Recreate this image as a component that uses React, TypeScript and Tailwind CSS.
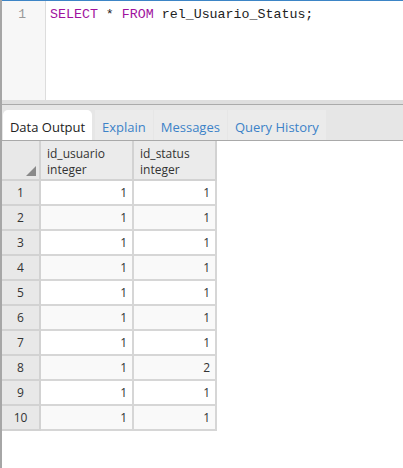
import React from 'react';

const rows = [
  [1, 1, 1],
  [2, 1, 1],
  [3, 1, 1],
  [4, 1, 1],
  [5, 1, 1],
  [6, 1, 1],
  [7, 1, 1],
  [8, 1, 2],
  [9, 1, 1],
  [10, 1, 1],
];

const tabs = ['Explain', 'Messages', 'Query History'];

export default function App() {
  return (
    <div
      className="w-[403px] h-[468px] bg-white flex flex-col overflow-hidden border-l-2 border-[#a6a6a6]"
      style={{ fontFamily: '"Open Sans", "Noto Sans", sans-serif' }}
    >
      {/* Query editor */}
      <div className="h-[100px] flex border-t border-[#3d85c6] shrink-0">
        <div className="w-[44px] bg-[#f7f7f7] border-r border-[#dddddd] text-right pr-[19px] pt-[5px] text-[13px] leading-[18px] text-[#999999]"
          style={{ fontFamily: '"Liberation Mono", monospace' }}>
          1
        </div>
        <div
          className="pl-[4px] pt-[5px] text-[13.3px] leading-[18px] text-[#222222]"
          style={{ fontFamily: '"Liberation Mono", monospace' }}
        >
          <span className="text-[#a0129e]">SELECT</span> * <span className="text-[#a0129e]">FROM</span> rel_Usuario_Status;
        </div>
      </div>

      {/* Tab bar */}
      <div className="h-[4px] bg-[#dedede] shrink-0" />
      <div className="h-[37px] bg-[#e6e6e6] border-t border-[#aaaaaa] border-b border-b-[#a9a9a9] flex items-end gap-[1px] pl-[1px] shrink-0">
        <div className="h-[30px] w-[89px] bg-white rounded-t-[5px] flex items-center justify-center pt-[5px] text-[13px] text-[#222222] mr-[2px]">
          Data Output
        </div>
        {tabs.map(t => (
          <div
            key={t}
            className="h-[30px] px-[7px] pt-[5px] bg-[#ebebeb] flex items-center text-[13px] text-[#3c82c8]"
          >
            {t}
          </div>
        ))}
      </div>

      {/* Data grid */}
      <div className="grid grid-cols-[39px_93px_83px] w-fit text-[12px] text-[#333333]">
        <div className="h-[40px] bg-[#e8e8e8] border-r-2 border-b-2 border-[#d2d2d2] relative">
          <svg className="absolute right-[3px] bottom-[3px]" width="10" height="10" viewBox="0 0 10 10">
            <polygon points="10,0 10,10 0,10" fill="#8a8a8a" />
          </svg>
        </div>
        {['id_usuario', 'id_status'].map(h => (
          <div
            key={h}
            className="h-[40px] bg-[#ebebeb] border-r-2 border-b-2 border-[#d2d2d2] pl-[6px] pt-[5px] leading-[16px]"
          >
            <div>{h}</div>
            <div>integer</div>
          </div>
        ))}
        {rows.map(([n, a, b]) => (
          <React.Fragment key={n}>
            <div className="h-[25px] bg-[#e8e8e8] border-r-2 border-b-2 border-[#d2d2d2] flex items-center justify-center pt-[1px]">
              {n}
            </div>
            <div
              className={`h-[25px] border-r-2 border-b-2 border-[#d6d6d6] flex items-center justify-end pr-[5px] pt-[1px] ${
                n % 2 === 0 ? 'bg-[#f9f9f9]' : 'bg-white'
              }`}
            >
              {a}
            </div>
            <div
              className={`h-[25px] border-r-2 border-b-2 border-[#d6d6d6] flex items-center justify-end pr-[5px] pt-[1px] ${
                n % 2 === 0 ? 'bg-[#f9f9f9]' : 'bg-white'
              }`}
            >
              {b}
            </div>
          </React.Fragment>
        ))}
      </div>
    </div>
  );
}
